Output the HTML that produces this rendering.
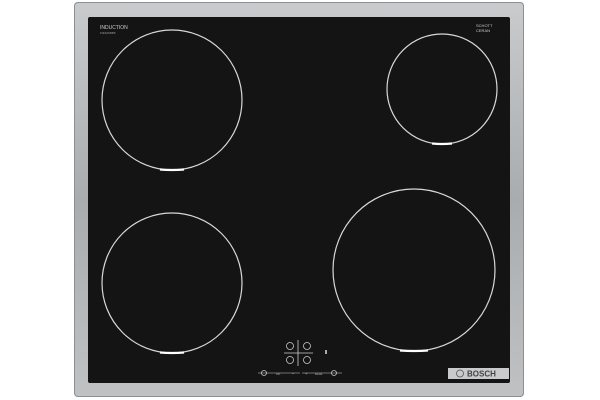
<!DOCTYPE html>
<html><head><style>
body{margin:0;width:600px;height:400px;background:#fff;position:relative;overflow:hidden;font-family:"Liberation Sans",sans-serif}
.frame{position:absolute;left:74px;top:2px;width:450px;height:395px;border-radius:4px;background:linear-gradient(180deg,#c9cbcd,#a9acae 50%,#bfc1c3);box-shadow:inset 0 0 0 1px #8d9092}
.glass{position:absolute;left:88px;top:17px;width:422px;height:366px;background:#141414;border-radius:2px}
</style></head><body>
<div class="frame"></div>
<div class="glass"></div>
<svg width="600" height="400" style="position:absolute;left:0;top:0">
<g fill="none" stroke="#d8d8d8" stroke-width="1.2">
<circle cx="172" cy="100" r="70"/>
<circle cx="442" cy="89" r="55"/>
<circle cx="172" cy="283" r="70"/>
<circle cx="414" cy="270" r="81"/>
</g>
<g stroke="#fff" stroke-width="2.2" fill="none">
<path d="M160 169.5 Q172 170.5 184 169.5"/>
<path d="M432 143.5 Q442 144.5 452 143.5"/>
<path d="M160 352.5 Q172 353.5 184 352.5"/>
<path d="M400 350.5 Q414 351.5 428 350.5"/>
</g>
<text x="100" y="29" fill="#ccc" font-size="5">INDUCTION</text>
<text x="100" y="34" fill="#999" font-size="3">PIE645BB5</text>
<text x="476" y="27" fill="#ccc" font-size="4">SCHOTT</text>
<text x="476" y="32" fill="#ccc" font-size="4">CERAN</text>
<g fill="none" stroke="#ccc" stroke-width="0.8">
<circle cx="290" cy="346" r="3.5"/><circle cx="307" cy="346" r="3.5"/>
<circle cx="290" cy="360" r="3.5"/><circle cx="307" cy="360" r="3.5"/>
<path d="M298 340v26M284 353h29"/>
<path d="M258 373h42M302 373h40" stroke-width="0.5"/>
<circle cx="264" cy="373" r="2.5"/><circle cx="334" cy="373" r="2.5"/>
</g>
<rect x="325" y="350" width="2" height="4" fill="#aaa"/>
<text x="276" y="375" fill="#bbb" font-size="3">OK</text>
<text x="292" y="375" fill="#bbb" font-size="4">−</text>
<text x="305" y="375" fill="#bbb" font-size="4">+</text>
<text x="315" y="375" fill="#bbb" font-size="3">boost</text>
<rect x="448" y="368" width="61" height="11" fill="#c8cacc"/>
<circle cx="460" cy="373.5" r="3.5" fill="none" stroke="#555" stroke-width="0.8"/>
<text x="467" y="376.5" fill="#444" font-size="8" font-weight="bold">BOSCH</text>
</svg>
</body></html>
